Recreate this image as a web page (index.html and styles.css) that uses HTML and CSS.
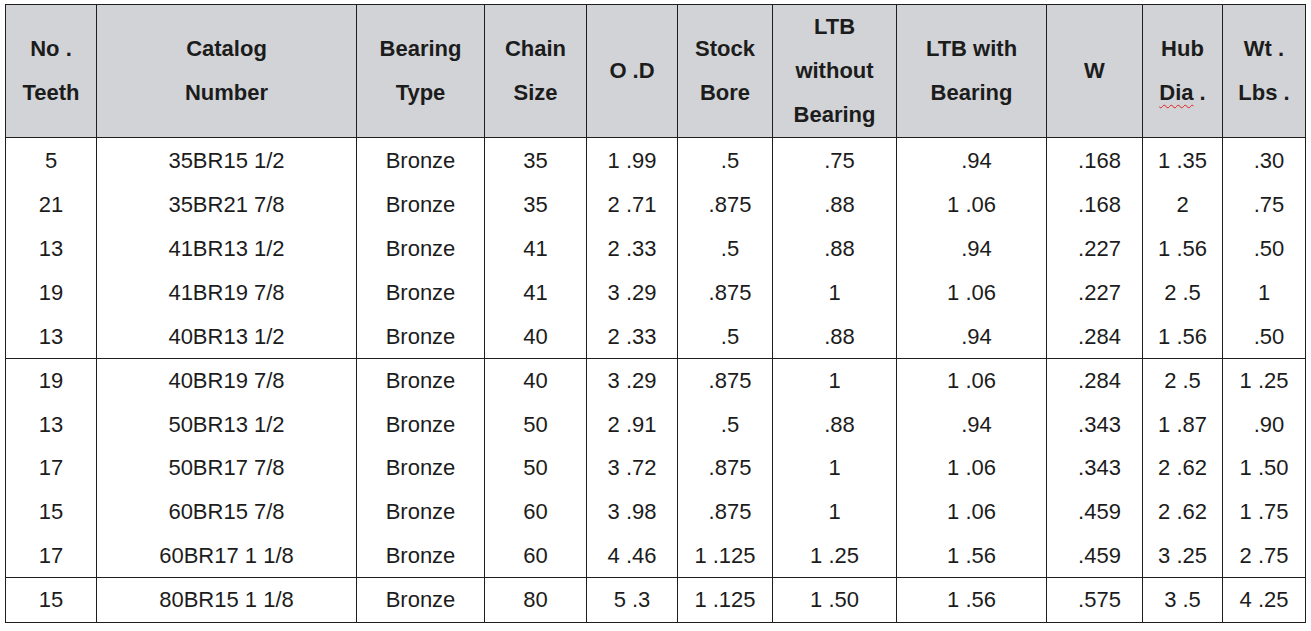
FILE: index.html
```html
<!DOCTYPE html>
<html>
<head>
<meta charset="utf-8">
<link rel="stylesheet" href="styles.css">
</head>
<body>
<table class="spec">
  <colgroup>
    <col class="c1"><col class="c2"><col class="c3"><col class="c4"><col class="c5"><col class="c6"><col class="c7"><col class="c8"><col class="c9"><col class="c10"><col class="c11">
  </colgroup>
  <thead>
    <tr>
      <th>No .<br>Teeth</th>
      <th>Catalog<br>Number</th>
      <th>Bearing<br>Type</th>
      <th>Chain<br>Size</th>
      <th>O .D</th>
      <th>Stock<br>Bore</th>
      <th>LTB<br>without<br>Bearing</th>
      <th>LTB with<br>Bearing</th>
      <th>W</th>
      <th>Hub<br><span class="spell">Dia</span> .</th>
      <th>Wt .<br>Lbs .</th>
    </tr>
  </thead>
  <tbody>
    <tr><td>5</td><td>35BR15 1/2</td><td>Bronze</td><td>35</td><td>1 .99</td><td class="dec">.5</td><td class="dec">.75</td><td class="dec">.94</td><td class="dec">.168</td><td>1 .35</td><td class="dec">.30</td></tr>
    <tr><td>21</td><td>35BR21 7/8</td><td>Bronze</td><td>35</td><td>2 .71</td><td class="dec">.875</td><td class="dec">.88</td><td>1 .06</td><td class="dec">.168</td><td>2</td><td class="dec">.75</td></tr>
    <tr><td>13</td><td>41BR13 1/2</td><td>Bronze</td><td>41</td><td>2 .33</td><td class="dec">.5</td><td class="dec">.88</td><td class="dec">.94</td><td class="dec">.227</td><td>1 .56</td><td class="dec">.50</td></tr>
    <tr><td>19</td><td>41BR19 7/8</td><td>Bronze</td><td>41</td><td>3 .29</td><td class="dec">.875</td><td>1</td><td>1 .06</td><td class="dec">.227</td><td>2 .5</td><td>1</td></tr>
    <tr><td>13</td><td>40BR13 1/2</td><td>Bronze</td><td>40</td><td>2 .33</td><td class="dec">.5</td><td class="dec">.88</td><td class="dec">.94</td><td class="dec">.284</td><td>1 .56</td><td class="dec">.50</td></tr>
  </tbody>
  <tbody class="mid">
    <tr><td>19</td><td>40BR19 7/8</td><td>Bronze</td><td>40</td><td>3 .29</td><td class="dec">.875</td><td>1</td><td>1 .06</td><td class="dec">.284</td><td>2 .5</td><td>1 .25</td></tr>
    <tr><td>13</td><td>50BR13 1/2</td><td>Bronze</td><td>50</td><td>2 .91</td><td class="dec">.5</td><td class="dec">.88</td><td class="dec">.94</td><td class="dec">.343</td><td>1 .87</td><td class="dec">.90</td></tr>
    <tr><td>17</td><td>50BR17 7/8</td><td>Bronze</td><td>50</td><td>3 .72</td><td class="dec">.875</td><td>1</td><td>1 .06</td><td class="dec">.343</td><td>2 .62</td><td>1 .50</td></tr>
    <tr><td>15</td><td>60BR15 7/8</td><td>Bronze</td><td>60</td><td>3 .98</td><td class="dec">.875</td><td>1</td><td>1 .06</td><td class="dec">.459</td><td>2 .62</td><td>1 .75</td></tr>
    <tr><td>17</td><td>60BR17 1 1/8</td><td>Bronze</td><td>60</td><td>4 .46</td><td>1 .125</td><td>1 .25</td><td>1 .56</td><td class="dec">.459</td><td>3 .25</td><td>2 .75</td></tr>
  </tbody>
  <tbody class="last">
    <tr><td>15</td><td>80BR15 1 1/8</td><td>Bronze</td><td>80</td><td>5 .3</td><td>1 .125</td><td>1 .50</td><td>1 .56</td><td class="dec">.575</td><td>3 .5</td><td>4 .25</td></tr>
  </tbody>
</table>
</body>
</html>
```

FILE: styles.css
```css
html, body {
  margin: 0;
  padding: 0;
  background: #ffffff;
}

body {
  padding: 4px 0 0 5px;
  font-family: "Liberation Sans", Arial, sans-serif;
  color: #1c1c1c;
}

.spec {
  border-collapse: collapse;
  table-layout: fixed;
  width: 1300px;
  font-size: 22px;
  line-height: 44px;
}

.c1 { width: 91px; }
.c2 { width: 260px; }
.c3 { width: 128px; }
.c4 { width: 102px; }
.c5 { width: 91px; }
.c6 { width: 95px; }
.c7 { width: 124px; }
.c8 { width: 150px; }
.c9 { width: 96px; }
.c10 { width: 80px; }
.c11 { width: 83px; }

.spec th,
.spec td {
  border-left: 1px solid #1e1e1e;
  border-right: 1px solid #1e1e1e;
  padding: 0;
  text-align: center;
  vertical-align: middle;
  white-space: nowrap;
}

.spec thead th {
  background: #d1d3d6;
  font-weight: bold;
  height: 131px;
  border-top: 1px solid #1e1e1e;
  border-bottom: 1px solid #1e1e1e;
}

.spec tbody {
  border-bottom: 1px solid #1e1e1e;
}

.spec td {
  height: 44px;
  line-height: 43px;
}

.spec .mid td {
  height: 43.6px;
}

.spec .last td {
  height: 44px;
  line-height: 44px;
}

.spec td.dec {
  padding-left: 10px;
}

.spell {
  text-decoration: underline wavy #e02020;
  text-decoration-thickness: 1px;
  text-underline-offset: 4px;
}
```
